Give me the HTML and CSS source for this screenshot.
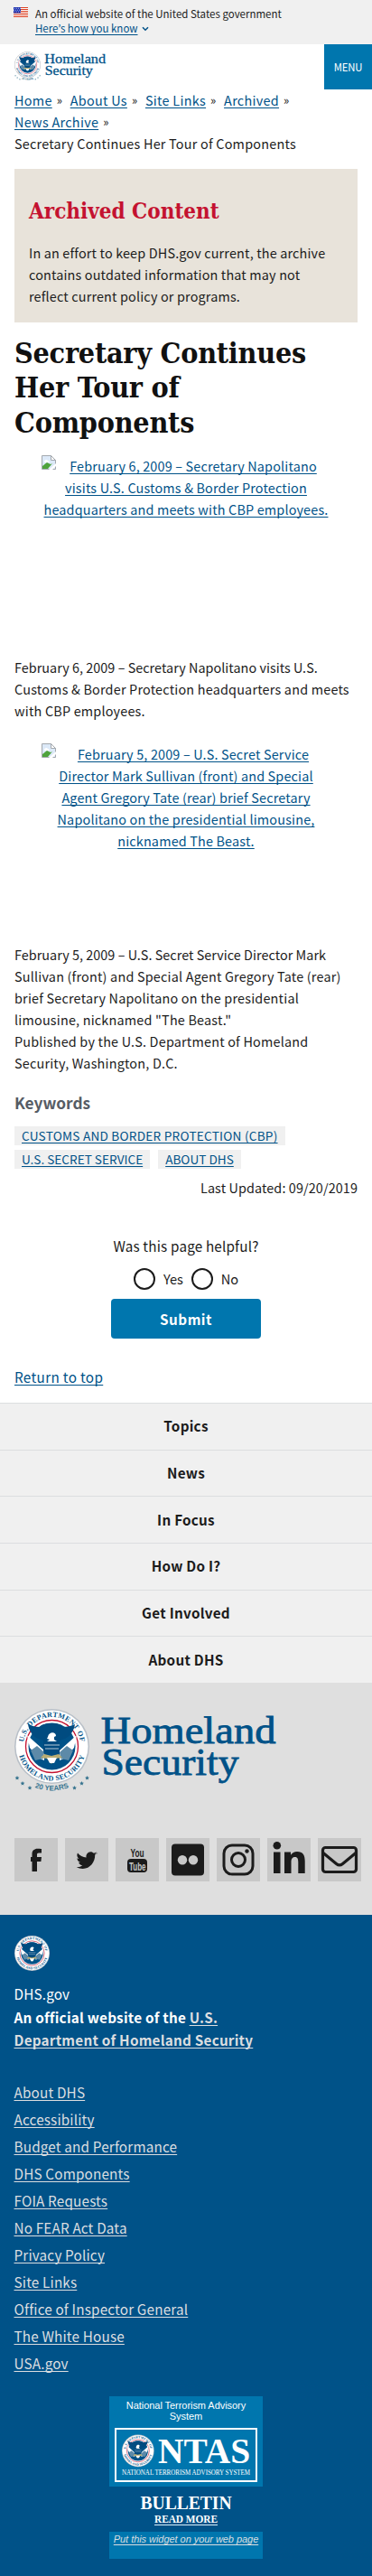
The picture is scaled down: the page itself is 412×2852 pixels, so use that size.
FILE: index.html
```
<!DOCTYPE html>
<html lang="en">
<head>
<meta charset="utf-8">
<title>Secretary Continues Her Tour of Components | Homeland Security</title>
<link rel="stylesheet" href="styles.css">
</head>
<body>
<svg class="defs" aria-hidden="true">
  <defs>
    <path id="arc-top" d="M10.500 46A31.500 31.500 0 1 1 72.500 46"/>
    <path id="arc-bottom" d="M4 42A37.500 37.500 0 0 0 79 42"/>
    <path id="arc-years" d="M-8 58A54 54 0 0 0 91 58"/>
    <g id="seal">
      <circle cx="41.500" cy="41.500" r="41.500" fill="#b9c0c8"/>
      <circle cx="41.500" cy="41.500" r="40" fill="#fff"/>
      <g class="seal-text">
        <text><textPath href="#arc-top" startOffset="50%">U.S. DEPARTMENT OF</textPath></text>
        <text><textPath href="#arc-bottom" startOffset="50%">HOMELAND SECURITY</textPath></text>
      </g>
      <circle cx="41.500" cy="41.500" r="29" fill="#fff" stroke="#c41230" stroke-width="1.300"/>
      <circle cx="41.500" cy="41.500" r="26" fill="#005288"/>
      <path fill="#fff" d="M14 29l19 17v11l-7-3-9-11zM69 29L50 46v11l7-3 9-11z"/>
      <path fill="#5d8aa8" d="M18 46l7-5 8 7-1 7-9 2zM65 46l-7-5-8 7 1 7 9 2z"/>
      <path fill="#004b80" d="M15 17c4 2 9 3 13 3 2-3 7-4 13-4s11 1 13 4c4 0 9-1 13-3-1 7-5 13-11 16l-6 2v10c0 6-3 10-9 12-6-2-9-6-9-12V35l-6-2c-6-3-10-9-11-16z"/>
      <path fill="#fff" d="M37 31c1-6 9-6 9-1l-2 1v3l3 2H36l3-2-3-1z"/>
      <path stroke="#b8cad6" stroke-width="1" d="M33 40h17M34 44h15"/>
      <path fill="#b9ad73" d="M33 50l8 2 8-2 4 4-8 1-4 6-5-6-7-1z"/>
      <path fill="#fff" d="M36 54h11l-3 6h-5z"/>
    </g>
    <g id="logo">
      <use href="#seal"/>
      <text class="years"><textPath href="#arc-years" startOffset="50%">20 YEARS</textPath></text>
      <g fill="#37748f"><path id="star" d="M3 74l.7 1.500 1.700.2-1.300 1.200.4 1.600L3 77.700l-1.500.8.4-1.600-1.300-1.200 1.700-.2z"/>
      <use href="#star" x="6" y="6"/><use href="#star" x="14" y="11"/><use href="#star" x="63.500" y="11"/><use href="#star" x="71.500" y="6"/><use href="#star" x="77.500"/></g>
      <g class="wordmark">
        <text x="95.500" y="37.500" textLength="194" lengthAdjust="spacingAndGlyphs">Homeland</text>
        <text x="96.500" y="73" textLength="152" lengthAdjust="spacingAndGlyphs">Security</text>
      </g>
    </g>
    <g id="broken">
      <path d="M.5 15.500V.5h10l5 5v10z" fill="#dce9f8" stroke="#a3a8ae"/>
      <path d="M10.500.5v5h5z" fill="#fff" stroke="#a3a8ae"/>
      <path d="M3 7c0-2 3-3 4-1 2 0 2 2 1 2H3z" fill="#fff"/>
      <path d="M1 15v-3l5-4 4 2 2-1-5 6z" fill="#4fa33c"/>
      <path d="M8 16l8-7v3l-4 4z" fill="#fff"/>
    </g>
  </defs>
</svg>

<section class="banner">
  <svg class="flag" viewBox="0 0 16 11"><path fill="#fff" d="M0 0h16v11H0z"/><path stroke="#db3e1f" stroke-width="1" d="M0 .5h16M0 2.500h16M0 4.500h16M0 6.500h16M0 8.500h16M0 10.500h16"/><path fill="#1e33b1" d="M0 0h8v6.500H0z"/><path stroke="#fff" stroke-width=".8" stroke-dasharray=".8 1.200" d="M1 1.300h7M0 3.200h8M1 5.100h7"/></svg>
  <div>
    <p>An official website of the United States government</p>
    <p class="know"><a class="link" href="#">Here’s how you know</a><svg viewBox="0 0 8 6"><path d="M1 1.200l3 3 3-3" fill="none" stroke="#005288" stroke-width="1.500"/></svg></p>
  </div>
</section>

<header class="header">
  <svg class="header-logo" viewBox="0 0 292 102"><use href="#logo"/></svg>
  <button class="menu">MENU</button>
</header>

<main class="main">
  <nav class="crumbs">
    <div><a class="link" href="#">Home</a><i>»</i><a class="link" href="#">About Us</a><i>»</i><a class="link" href="#">Site Links</a><i>»</i><a class="link" href="#">Archived</a><i>»</i></div>
    <div><a class="link" href="#">News Archive</a><i>»</i></div>
    <div class="here">Secretary Continues Her Tour of Components</div>
  </nav>

  <section class="archived">
    <h2>Archived Content</h2>
    <p>In an effort to keep DHS.gov current, the archive<br>contains outdated information that may not<br>reflect current policy or programs.</p>
  </section>

  <h1>Secretary Continues<br>Her Tour of<br>Components</h1>

  <a class="photo link" href="#"><svg viewBox="0 0 16 16"><use href="#broken"/></svg>February 6, 2009 – Secretary Napolitano<br>visits U.S. Customs &amp; Border Protection<br>headquarters and meets with CBP employees.</a>
  <p class="caption one"><span class="snug">February 6, 2009 – Secretary Napolitano visits U.S.</span><br>Customs &amp; Border Protection headquarters and meets<br>with CBP employees.</p>
  <a class="photo second link" href="#"><svg viewBox="0 0 16 16"><use href="#broken"/></svg>February 5, 2009 – U.S. Secret Service<br>Director Mark Sullivan (front) and Special<br>Agent Gregory Tate (rear) brief Secretary<br>Napolitano on the presidential limousine,<br>nicknamed The Beast.</a>
  <p class="caption"><span class="snug">February 5, 2009 – U.S. Secret Service Director Mark</span><br>Sullivan (front) and Special Agent Gregory Tate (rear)<br>brief Secretary Napolitano on the presidential<br>limousine, nicknamed "The Beast."<br>Published by the U.S. Department of Homeland<br>Security, Washington, D.C.</p>

  <h3>Keywords</h3>
  <div class="tags"><a class="link" href="#">CUSTOMS AND BORDER PROTECTION (CBP)</a><a class="link snug" href="#">U.S. SECRET SERVICE</a><a class="link snug" href="#">ABOUT DHS</a></div>
  <p class="updated">Last Updated: 09/20/2019</p>

  <form class="survey">
    <p>Was this page helpful?</p>
    <div class="choices"><span class="radio"></span><label>Yes</label><span class="radio"></span><label>No</label></div>
    <button type="button" class="submit">Submit</button>
  </form>
  <p class="return"><a class="link" href="#">Return to top</a></p>
</main>

<footer>
  <nav class="sections"><a>Topics</a><a>News</a><a>In Focus</a><a>How Do I?</a><a>Get Involved</a><a>About DHS</a></nav>
  <section class="brand">
    <svg class="brand-logo" viewBox="0 0 292 102"><use href="#logo"/></svg>
    <div class="social">
      <a><svg viewBox="0 0 48 48"><path d="M30 12v4.500h-3c-1.700 0-2 .8-2 2v2.500h5l-.6 5H25v11h-5.500V26H18v-5h1.500v-3.500c0-3.500 2.500-5.700 6-5.700 1.700 0 3.500.1 4.500.2z"/></svg></a>
      <a><svg viewBox="0 0 48 48"><path d="M35.500 16.300c-.7 1-1.500 1.800-2.300 2.500.2 7.500-5.300 15.200-13.500 15.200-2.700 0-5-.7-7-2 2.500.2 4.800-.4 6.600-1.800-2-.1-3.500-1.400-4.200-3.200.7.100 1.400.1 2-.1-2.200-.5-3.700-2.400-3.700-4.600.6.300 1.300.5 2 .6-2-1.500-2.700-4.100-1.400-6.300 2.300 2.900 5.800 4.700 9.600 4.900-.8-3.200 1.600-6.300 4.800-6.300 1.400 0 2.600.6 3.500 1.500 1.100-.2 2.100-.6 3-1.200-.3 1.200-1.100 2.100-2 2.700 1-.1 1.800-.4 2.600-.9z"/></svg></a>
      <a><svg viewBox="0 0 48 48"><rect x="13" y="23" width="22" height="15" rx="4"/><text x="16.500" y="21" class="you" textLength="15" lengthAdjust="spacingAndGlyphs">You</text><text x="15" y="35.500" class="tube" textLength="18.500" lengthAdjust="spacingAndGlyphs">Tube</text></svg></a>
      <a><svg viewBox="0 0 48 48"><rect x="6" y="6.500" width="36" height="35" rx="4"/><circle cx="18" cy="24.300" r="5.200" fill="#c8c8c8"/><circle cx="30" cy="24.300" r="5.200" fill="#c8c8c8"/></svg></a>
      <a><svg viewBox="0 0 48 48"><rect x="8" y="8" width="32" height="32" rx="9" fill="none" stroke="#1b1b1b" stroke-width="3"/><circle cx="24" cy="24" r="7.500" fill="none" stroke="#1b1b1b" stroke-width="3"/><circle cx="33.500" cy="14.500" r="2.200"/></svg></a>
      <a><svg viewBox="0 0 48 48"><circle cx="10.800" cy="8.200" r="4.300"/><path d="M7 15.500h7.500V39H7zM19 15.500h7v3.200c1.500-2.500 4-3.800 7-3.800 6.500 0 8.700 4 8.700 10.500V39h-7.400V27c0-3.300-.5-6-3.600-6-3.300 0-4.200 2.500-4.200 5.700V39H19z"/></svg></a>
      <a><svg viewBox="0 0 48 48"><rect x="5.500" y="10.500" width="37" height="27" rx="3" fill="none" stroke="#1b1b1b" stroke-width="3.200"/><path d="M6 16.500l14.500 12c2.200 1.800 4.800 1.800 7 0L42 16.500" fill="none" stroke="#1b1b1b" stroke-width="3.200"/></svg></a>
    </div>
  </section>

  <section class="identity">
    <svg class="small-seal" viewBox="0 0 83 83"><use href="#seal"/></svg>
    <p>DHS.gov</p>
    <p class="official">An official website of the <a href="#">U.S.</a><br><a href="#">Department of Homeland Security</a></p>
    <ul>
      <li><a href="#">About DHS</a></li><li><a href="#">Accessibility</a></li><li><a href="#">Budget and Performance</a></li><li><a href="#">DHS Components</a></li><li><a href="#">FOIA Requests</a></li><li><a href="#">No FEAR Act Data</a></li><li><a href="#">Privacy Policy</a></li><li><a href="#">Site Links</a></li><li><a href="#">Office of Inspector General</a></li><li><a href="#">The White House</a></li><li><a href="#">USA.gov</a></li>
    </ul>
    <aside class="ntas">
      <div class="ntas-head">
        <p>National Terrorism Advisory<br>System</p>
        <svg viewBox="0 0 158 60"><rect x="1" y="1" width="156" height="58" fill="none" stroke="#fff" stroke-width="2"/><use href="#seal" transform="translate(8 7.500) scale(.43)"/><text class="ntas-big" x="48" y="38.700" textLength="102" lengthAdjust="spacingAndGlyphs">NTAS</text><text class="ntas-small" x="8" y="52" textLength="142" lengthAdjust="spacingAndGlyphs">NATIONAL TERRORISM ADVISORY SYSTEM</text></svg>
      </div>
      <svg class="bulletin" viewBox="0 0 170 50"><text class="b1" x="34.500" y="24.700" textLength="101" lengthAdjust="spacingAndGlyphs">BULLETIN</text><text class="b2" x="50" y="39.700" textLength="70" lengthAdjust="spacingAndGlyphs">READ MORE</text><path stroke="#dff0fa" d="M50 42.500h70"/></svg>
      <div class="ntas-foot"><a href="#">Put this widget on your web page</a></div>
    </aside>
  </section>
</footer>
</body>
</html>
```
FILE: styles.css
```
* { box-sizing: border-box; }
body {
  margin: 0;
  background: #fff;
  color: #1b1b1b;
  font: 14.4px/24px "Noto Sans CJK JP", "Noto Sans", sans-serif;
  letter-spacing: .1px;
}
p, h1, h2, h3, ul { margin: 0; padding: 0; font-size: inherit; }
button { border: 0; padding: 0; font: inherit; color: #fff; background: #0076ae; }
svg { display: block; }
.defs { position: absolute; width: 0; height: 0; }
.link { color: #005288; }
a { text-decoration-thickness: 1px; text-underline-offset: 2px; text-decoration-skip-ink: none; }

.seal-text { font: 600 8px "Liberation Serif", serif; fill: #005288; text-anchor: middle; letter-spacing: .35px; }
.years { font: 700 8px "Liberation Sans", sans-serif; fill: #37748f; text-anchor: middle; letter-spacing: 0; }
.wordmark { font: 43px "Liberation Serif", serif; fill: #005288; stroke: #005288; stroke-width: .8px; letter-spacing: 0; }

.banner { display: flex; gap: 8px; height: 49px; padding: 7px 15px 0; background: #f0f0f0; font-size: 11.5px; line-height: 16px; letter-spacing: 0; }
.flag { width: 16px; height: 11px; margin-top: 1px; }
.know { display: flex; align-items: center; gap: 4px; }
.know svg { width: 8px; height: 6px; margin-top: 2px; }

.header { display: flex; justify-content: space-between; height: 50px; padding-left: 16px; }
.header-logo { width: 102px; height: 36px; margin-top: 8px; overflow: visible; }
.header .wordmark { stroke-width: 0; }
.menu { width: 53px; font-size: 11.3px; letter-spacing: -.1px; }

.main { display: flow-root; padding: 0 16px; height: 1454px; }
.crumbs > div { display: flex; gap: 5px; letter-spacing: .3px; }
.crumbs i { width: 10px; font-style: normal; font-size: 13px; }
.crumbs > .here { letter-spacing: .22px; }

.archived { height: 170px; margin-top: 16px; padding: 31px 16px 0; background: #e8e3da; }
.archived h2 { font: 700 24px/32px "DejaVu Serif Condensed", "DejaVu Serif", serif; font-stretch: condensed; color: #c41230; letter-spacing: 0; }
.archived p { margin-top: 18px; letter-spacing: .16px; }

h1 { margin: 15px 0 17px; font: 700 32px/38.400px "DejaVu Serif Condensed", "DejaVu Serif", serif; font-stretch: condensed; letter-spacing: -.25px; color: #111; }

.photo { display: block; width: 320px; height: 223px; margin-left: 30px; text-align: center; letter-spacing: .17px; }
.photo.second { height: 222px; }
.photo svg { float: left; width: 16px; height: 16px; }
.caption { letter-spacing: .2px; }
.caption.one { margin-bottom: 24px; }
.caption .snug { letter-spacing: .03px; }

h3 { margin: 19px 0 13px; font-size: 17.300px; line-height: 26px; letter-spacing: 0; color: #565c65; }
.tags { display: flex; flex-wrap: wrap; gap: 5px 9px; font-size: 13.600px; letter-spacing: .24px; line-height: 21px; }
.tags a { padding: 0 8px; background: #f0f0f0; }
.tags .snug { letter-spacing: 0; }
.updated { margin-top: 8.500px; text-align: right; }

.survey { display: flex; flex-direction: column; align-items: center; margin-top: 40px; font-size: 15.270px; letter-spacing: .17px; }
.choices { display: flex; align-items: center; height: 24px; margin-top: 13px; gap: 9px; font-size: 14.600px; letter-spacing: -.1px; }
.radio { width: 24px; height: 24px; border: 2px solid #1b1b1b; border-radius: 50%; }
.submit { width: 166px; height: 44px; margin-top: 10px; border-radius: 4px; font-weight: 700; letter-spacing: .5px; }
.return { margin-top: 30px; font-size: 15.270px; letter-spacing: .33px; }

.sections { display: grid; grid-template-rows: repeat(6, 1fr); height: 310px; background: #f0f0f0; }
.sections a { display: grid; place-items: center; padding-bottom: 2px; border-top: 1px solid #dcdee0; font-size: 15.270px; font-weight: 700; letter-spacing: .25px; }

.brand { height: 257px; padding: 29px 12px 0 16px; background: #dfdfdf; }
.brand-logo { width: 292px; height: 102px; overflow: visible; }
.social { display: flex; gap: 8px; margin-top: 41px; }
.social a { width: 48px; height: 48px; background: #c8c8c8; }
.social svg { fill: #1b1b1b; }
.you { font: 700 13px "Liberation Sans", sans-serif; letter-spacing: 0; }
.tube { font: 700 13px "Liberation Sans", sans-serif; fill: #c8c8c8; letter-spacing: 0; }

.identity { height: 732px; padding: 23px 15.500px 0; background: #005288; color: #fff; font-size: 15.270px; line-height: 25.600px; letter-spacing: .17px; }
.identity a { color: #dcdee0; }
.small-seal { width: 39px; height: 39px; margin-bottom: 13px; }
.official { font-weight: 700; letter-spacing: .23px; }
.identity ul { margin-top: 29px; list-style: none; line-height: 30px; }
.ntas { width: 170px; margin: 22px auto 0; text-align: center; font: 11px/12px "Liberation Sans", sans-serif; letter-spacing: -.05px; }
.ntas-head { height: 100px; padding: 4px 6px 0; background: #0076ae; }
.ntas-head svg { margin-top: 7px; width: 158px; height: 60px; }
.ntas-big { font: 700 41px "Liberation Serif", serif; fill: #fff; }
.ntas-small { font: 7.500px "Liberation Serif", serif; fill: #fff; }
.bulletin { width: 170px; height: 50px; }
.b1 { font: 700 21px "Liberation Serif", serif; fill: #fff; }
.b2 { font: 700 13px "Liberation Serif", serif; fill: #fff; }
.ntas-foot { height: 30px; padding-top: 2px; background: #0076ae; font-style: italic; font-size: 11px; white-space: nowrap; }
```
